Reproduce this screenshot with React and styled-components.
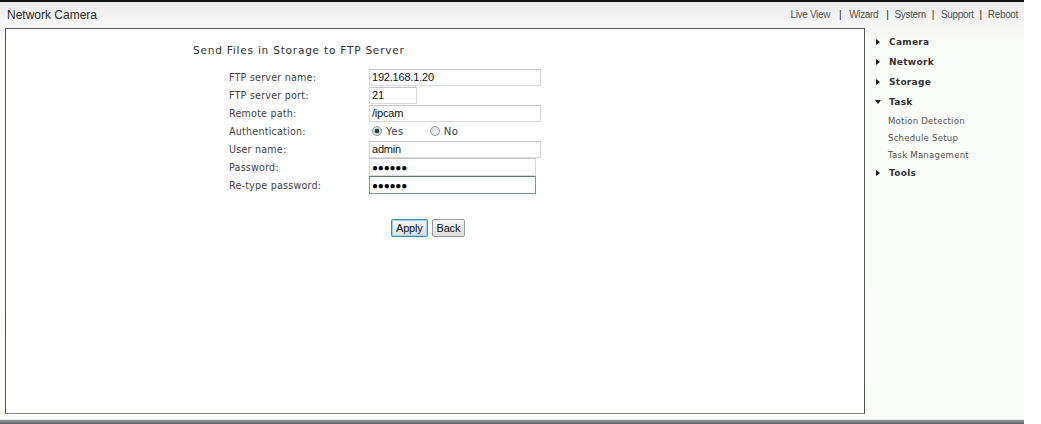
import React from 'react';
import styled, { createGlobalStyle } from 'styled-components';

const Global = createGlobalStyle`
  html, body { margin: 0; padding: 0; background: #fff; }
  body { font-family: "DejaVu Sans", Verdana, sans-serif; }
`;

const Page = styled.div`
  width: 1024px;
  height: 424px;
  display: flex;
  flex-direction: column;
  border-top: 2px solid #111;
  box-sizing: border-box;
  background: linear-gradient(#ececec 0px, #f6f6f6 22px, #fafcf8 40px, #fbfdf9 100%);
`;

const Header = styled.div`
  height: 26px;
  display: flex;
  align-items: center;
  justify-content: space-between;
  padding: 0 6px 0 7px;
  font-family: "Liberation Sans", Arial, sans-serif;
  color: #333;
`;

const Brand = styled.div`
  font-size: 12px;
  color: #2a2a2a;
  margin-top: -1px;
`;

const Nav = styled.nav`
  display: flex;
  align-items: center;
  margin-top: -2px;
  font-size: 10px;
  letter-spacing: -0.35px;
`;

const NavLink = styled.span`
  color: #555;
`;

const Sep = styled.span`
  margin: 0 ${p => p.$r}px 0 ${p => p.$l}px;
  color: #222;
`;

const Body = styled.div`
  display: flex;
  flex: 1;
`;

const Panel = styled.div`
  margin-left: 5px;
  width: 860px;
  height: 386px;
  box-sizing: border-box;
  border: 1px solid #555;
  border-bottom-color: #888;
  background: #fff;
  padding: 14px 0 0 0;
`;

const Title = styled.div`
  margin-left: 187px;
  font-size: 10.6px;
  color: #333;
  letter-spacing: 0.75px;
  height: 14px;
  line-height: 14px;
`;

const FormGrid = styled.div`
  margin-top: 11px;
  margin-left: 223px;
  display: grid;
  grid-template-columns: 140px auto;
  grid-auto-rows: 18px;
  align-items: center;
`;

const Label = styled.div`
  font-size: 9.6px;
  color: #444;
  letter-spacing: 0.2px;
`;

const Field = styled.div`
  width: ${p => p.$w}px;
  height: ${p => (p.$h || 17)}px;
  box-sizing: border-box;
  border: 1px solid ${p => (p.$focus ? '#7a9a96' : '#d9d9d9')};
  border-top-color: ${p => (p.$focus ? '#5f7d7a' : '#c6c6c6')};
  background: #fff;
  font-family: "Liberation Sans", Arial, sans-serif;
  font-size: 11px;
  letter-spacing: -0.2px;
  color: #111;
  padding-left: 2px;
  display: flex;
  align-items: center;
`;

const Dots = styled.span`
  font-size: 10px;
  font-weight: bold;
  color: #000;
`;

const RadioGroup = styled.div`
  display: flex;
  align-items: center;
  font-size: 10.2px;
  letter-spacing: 0.4px;
  color: #444;
  padding-left: 3px;
`;

const Radio = styled.span`
  width: 10px;
  height: 10px;
  border-radius: 50%;
  box-sizing: border-box;
  border: 1px solid #8e9a9a;
  background: ${p => (p.$on
    ? 'radial-gradient(circle, #2e3b3b 0 2px, #c9d6d6 2.6px, #eef2f2)'
    : 'radial-gradient(circle, #f4f4f4, #d4d8d8)')};
  margin-right: 4px;
  display: inline-block;
`;

const RadioText = styled.span`
  margin-right: ${p => p.$mr || 0}px;
`;

const ButtonRow = styled.div`
  display: flex;
  gap: 4px;
  margin-left: 385px;
  margin-top: 25px;
`;

const Button = styled.button`
  font-family: "Liberation Sans", Arial, sans-serif;
  font-size: 11px;
  letter-spacing: -0.2px;
  height: 18px;
  padding: 0 4px;
  color: #111;
  border-radius: 2px;
  border: 1px solid ${p => (p.$focus ? '#3c8fb8' : '#9a9a9a')};
  box-shadow: ${p => (p.$focus ? 'inset 0 0 0 1px #9fd6ef' : 'none')};
  background: linear-gradient(#f6f6f6, #dedede);
  cursor: pointer;
`;

const Side = styled.aside`
  flex: 1;
  padding: 4px 0 0 10px;
  display: flex;
  flex-direction: column;
`;

const MenuItem = styled.div`
  display: flex;
  align-items: center;
  height: ${p => p.$h || 20}px;
  font-size: ${p => (p.$sub ? '8.6px' : '9px')};
  font-weight: ${p => (p.$sub ? 'normal' : 'bold')};
  color: ${p => (p.$sub ? '#555' : '#333')};
  padding-left: ${p => (p.$sub ? '13px' : '0')};
  letter-spacing: ${p => (p.$sub ? '0.2px' : '0.3px')};
`;

const Arrow = styled.span`
  width: 0;
  height: 0;
  margin-right: 9px;
  ${p => (p.$open
    ? 'border-left: 3px solid transparent; border-right: 3px solid transparent; border-top: 4px solid #111; margin-right: 8px;'
    : 'border-top: 3.5px solid transparent; border-bottom: 3.5px solid transparent; border-left: 4px solid #111; margin-left: 1px;')}
`;

const Footer = styled.div`
  height: 4px;
  border-top: 1px solid #e6e6e6;
  background: linear-gradient(#9a9a9a, #5f6468);
`;

const fields = [
  { label: 'FTP server name:', value: '192.168.1.20', w: 172 },
  { label: 'FTP server port:', value: '21', w: 48 },
  { label: 'Remote path:', value: '/ipcam', w: 172 },
];

const App = () => (
  <>
    <Global />
    <Page>
      <Header>
        <Brand>Network Camera</Brand>
        <Nav>
          <NavLink>Live View</NavLink>
          <Sep $l={9} $r={8}>|</Sep>
          <NavLink>Wizard</NavLink>
          <Sep $l={8} $r={6}>|</Sep>
          <NavLink>System</NavLink>
          <Sep $l={6} $r={7}>|</Sep>
          <NavLink>Support</NavLink>
          <Sep $l={6} $r={6}>|</Sep>
          <NavLink>Reboot</NavLink>
        </Nav>
      </Header>
      <Body>
        <Panel>
          <Title>Send Files in Storage to FTP Server</Title>
          <FormGrid>
            {fields.map(f => (
              <React.Fragment key={f.label}>
                <Label>{f.label}</Label>
                <Field $w={f.w}>{f.value}</Field>
              </React.Fragment>
            ))}
            <Label>Authentication:</Label>
            <RadioGroup>
              <Radio $on />
              <RadioText $mr={26}>Yes</RadioText>
              <Radio />
              <RadioText>No</RadioText>
            </RadioGroup>
            <Label>User name:</Label>
            <Field $w={172}>admin</Field>
            <Label>Password:</Label>
            <Field $w={167} $h={18}><Dots>●●●●●●</Dots></Field>
            <Label>Re-type password:</Label>
            <Field $w={167} $h={18} $focus><Dots>●●●●●●</Dots></Field>
          </FormGrid>
          <ButtonRow>
            <Button $focus>Apply</Button>
            <Button>Back</Button>
          </ButtonRow>
        </Panel>
        <Side>
          <MenuItem><Arrow />Camera</MenuItem>
          <MenuItem><Arrow />Network</MenuItem>
          <MenuItem><Arrow />Storage</MenuItem>
          <MenuItem><Arrow $open />Task</MenuItem>
          <MenuItem $sub $h={17}>Motion Detection</MenuItem>
          <MenuItem $sub $h={17}>Schedule Setup</MenuItem>
          <MenuItem $sub $h={17}>Task Management</MenuItem>
          <MenuItem><Arrow />Tools</MenuItem>
        </Side>
      </Body>
      <Footer />
    </Page>
  </>
);

export default App;
